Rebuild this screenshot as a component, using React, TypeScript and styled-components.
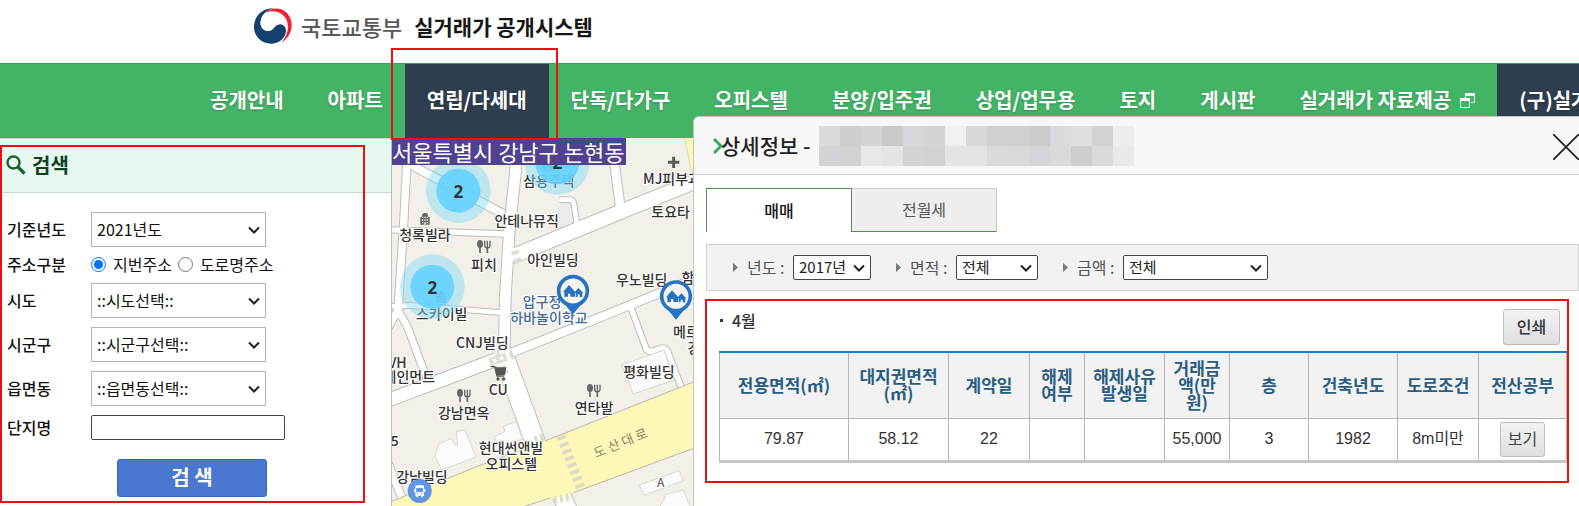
import React from "react";
import styled, { createGlobalStyle, css } from "styled-components";

const KOREAN = `"Noto Sans CJK KR", sans-serif`;
const RED = "#ee0d12";

const GlobalStyle = createGlobalStyle`
  *, *::before, *::after { box-sizing: border-box; }
  body { margin: 0; background: #fff; color: #111; font: 16px/20px ${KOREAN}; }
  button, input, select { font: inherit; color: inherit; }
`;

const Page = styled.div`
  position: relative;
  overflow: hidden;
`;

/* ---------- header and navigation ---------- */

const Header = styled.header`
  display: flex;
  align-items: center;
  height: 63px;
  padding: 0 0 12px 253px;
`;

const Brand = styled.a`
  display: flex;
  align-items: center;
  color: #161616;
  font-size: 21px;
  font-weight: 700;
  white-space: nowrap;
  text-decoration: none;
`;

const Ministry = styled.span`
  margin: 0 12px 0 8px;
  color: #58585a;
  font-size: 22px;
  font-weight: 500;
`;

const Nav = styled.nav`
  display: flex;
  height: 75px;
  padding-left: 188px;
  background: #43b366;
  border-top: 1px solid #35a057;
`;

const NavLink = styled.a<{ $dark?: boolean }>`
  display: flex;
  flex: none;
  align-items: center;
  gap: 9px;
  padding: 0 22px 2px;
  color: #fff;
  font-size: 20px;
  font-weight: 700;
  line-height: 24px;
  white-space: nowrap;
  text-decoration: none;
  text-shadow: 0 1px 2px rgba(0, 0, 0, 0.2);
  background: ${(p) => (p.$dark ? "#2f3e4e" : "transparent")};
`;

const NavItem = styled.div`
  position: relative;
  display: flex;
  flex: none;
`;

/* Red marker frame laid over the part it points at. */
const Marker = styled.div<{ $inset: string }>`
  position: absolute;
  z-index: 2;
  inset: ${(p) => p.$inset};
  border: 2px solid ${RED};
  pointer-events: none;
`;

/* ---------- search side bar ---------- */

const Body = styled.main`
  display: flex;
`;

const Side = styled.aside`
  position: relative;
  flex: none;
  width: 391px;
`;

const SideHead = styled.h2`
  display: flex;
  align-items: center;
  gap: 6px;
  height: 55px;
  margin: 0;
  padding: 0 0 2px 6px;
  color: #123f1d;
  font-size: 20px;
  font-weight: 700;
  background: #e6f8ef;
  border-top: 1px solid #c9d8d0;
  border-bottom: 1px solid #c2dccb;
`;

const Form = styled.form`
  display: flex;
  flex-direction: column;
  gap: 9px;
  padding: 19px 0 9px 7px;
`;

const Row = styled.div`
  display: flex;
  align-items: center;
`;

const RowLabel = styled.label`
  width: 84px;
  padding-bottom: 2px;
  font-weight: 500;
  line-height: 16px;
`;

const Choice = styled.label`
  display: flex;
  align-items: center;
  gap: 7px;
  height: 18px;
  margin-right: 6px;
  padding-bottom: 2px;
  line-height: 16px;
`;

const Radio = styled.input`
  width: 15px;
  height: 15px;
  margin: 0;
`;

const SelectBox = styled.div<{ $w: number }>`
  display: grid;
  width: ${(p) => p.$w}px;
`;

const NativeSelect = styled.select<{ $compact?: boolean }>`
  grid-area: 1 / 1;
  width: 100%;
  height: 35px;
  padding: 0 20px 2px 5px;
  appearance: none;
  background: #fff;
  border: 1px solid #b4b4b4;
  border-radius: 0;
  ${(p) =>
    p.$compact &&
    css`
      height: 25px;
      color: #222;
      font-size: 15px;
      border-color: #444;
      border-radius: 2px;
    `}
`;

const Chevron = styled.svg`
  grid-area: 1 / 1;
  place-self: center end;
  margin-right: 6px;
  pointer-events: none;
`;

const NameInput = styled.input`
  width: 194px;
  height: 25px;
  padding: 0 5px;
  border: 1px solid #444;
  border-radius: 2px;
`;

const SearchButton = styled.button`
  width: 150px;
  height: 38px;
  margin: 10px 0 0 110px;
  padding: 0 0 2px;
  color: #fff;
  font-size: 20px;
  font-weight: 700;
  background: #4a77d0;
  border: 1px solid #3565c2;
  border-radius: 3px;
`;

/* ---------- map ---------- */

const MapArea = styled.section`
  position: relative;
  flex: 1;
  min-width: 0;
  background: #f3f0ea;
  border-left: 1px solid #b9b9b9;
`;

const MapDrawing = styled.svg`
  display: block;
  font-family: ${KOREAN};
`;

const MapTitle = styled.div`
  position: absolute;
  top: 0;
  left: 0;
  padding-right: 1px;
  color: #fff;
  font-size: 22px;
  line-height: 27px;
  white-space: nowrap;
  background: #50428f;
`;

/* ---------- detail window ---------- */

const Detail = styled.section`
  position: absolute;
  top: 116px;
  right: 0;
  bottom: 0;
  left: 693px;
  background: #fff;
  border: solid #c4c4c4;
  border-width: 1px 0 0 1px;
  border-top-left-radius: 6px;
`;

const DetailHead = styled.header`
  display: flex;
  align-items: center;
  height: 58px;
  padding-left: 19px;
  background: #f7f7f7;
  border-bottom: 1px solid #ccc;
  border-top-left-radius: 6px;
`;

const DetailTitle = styled.h2`
  margin: 0 8px 0 -2px;
  padding-bottom: 2px;
  color: #222;
  font-size: 21px;
  font-weight: 500;
  white-space: nowrap;
`;

const Mosaic = styled.div`
  display: grid;
  grid-template-columns: repeat(15, 21px);
  grid-auto-rows: 20px;
`;

const Tile = styled.span<{ $c: string }>`
  background: ${(p) => p.$c};
`;

const CloseButton = styled.button`
  display: flex;
  margin-left: auto;
  padding: 3px 0 0;
  background: none;
  border: 0;
`;

const DetailBody = styled.div`
  padding: 13px 0 0 11px;
`;

const Tabs = styled.div`
  display: flex;
  margin-left: 1px;
`;

const Tab = styled.button<{ $active?: boolean }>`
  width: 145px;
  height: 44px;
  padding: 0 0 2px;
  color: #555;
  background: #eee;
  border: solid #ccc;
  border-width: 1px 1px 1px 0;
  border-bottom-color: #4f8f52;
  ${(p) =>
    p.$active &&
    css`
      width: 146px;
      color: #111;
      font-weight: 500;
      background: #fff;
      border-width: 1px 1px 0 1px;
      border-color: #4f8f52;
    `}
`;

const Filters = styled.div`
  display: flex;
  align-items: center;
  gap: 25px;
  height: 47px;
  margin: 12px 0 8px 1px;
  padding-left: 26px;
  background: #f2f2f2;
  border: 1px solid #d2d2d2;
`;

const Filter = styled.div`
  display: flex;
  align-items: center;
`;

const FilterLabel = styled.label`
  width: 46px;
  margin-left: 9px;
  padding-bottom: 2px;
  color: #555;
  white-space: nowrap;
`;

const Month = styled.section`
  margin-right: 10px;
  padding: 8px 1px 18px 12px;
  border: 2px solid ${RED};
`;

const MonthHead = styled.div`
  display: flex;
  justify-content: space-between;
  margin: 0 6px 6px 1px;
`;

const MonthTitle = styled.h3`
  display: flex;
  align-items: center;
  gap: 9px;
  height: 22px;
  margin: 0;
  color: #333;
  font-size: 16px;
  font-weight: 500;

  &::before {
    width: 3px;
    height: 3px;
    background: #333;
    content: "";
  }
`;

const GrayButton = styled.button<{ $small?: boolean }>`
  width: ${(p) => (p.$small ? 45 : 57)}px;
  height: ${(p) => (p.$small ? 35 : 36)}px;
  padding: 0 0 2px;
  color: ${(p) => (p.$small ? "#444" : "#333")};
  font-family: ${KOREAN};
  font-weight: ${(p) => (p.$small ? 400 : 500)};
  background: linear-gradient(#f3f3f3, #dcdee0);
  border: 1px solid #bcbcbc;
  border-radius: 3px;
`;

const Table = styled.table`
  width: 100%;
  table-layout: fixed;
  border-collapse: collapse;
  color: #333;
  font-family: "Liberation Sans", ${KOREAN};
  text-align: center;
  border-top: 2px solid #2b7ab3;
  border-bottom: 3px solid #c6c6c6;
`;

const Th = styled.th`
  height: 66px;
  padding: 0 0 2px;
  color: #2a5d82;
  font: 700 17px/17px ${KOREAN};
  white-space: pre;
  background: #f2f2f2;
  border: solid #b5b5b5;
  border-width: 0 1px 1px 1px;
`;

const Td = styled.td`
  height: 43px;
  padding: 0;
  border: solid #b5b5b5;
  border-width: 1px 1px 0 1px;
`;

/* ---------- data ---------- */

const MENU: { text: string; dark?: boolean; marked?: boolean; popup?: boolean }[] = [
  { text: "공개안내" },
  { text: "아파트" },
  { text: "연립/다세대", dark: true, marked: true },
  { text: "단독/다가구" },
  { text: "오피스텔" },
  { text: "분양/입주권" },
  { text: "상업/업무용" },
  { text: "토지" },
  { text: "게시판" },
  { text: "실거래가 자료제공", popup: true },
  { text: "(구)실거래가", dark: true },
];

const AREAS = [
  { id: "sido", label: "시도", text: "::시도선택::" },
  { id: "sigungu", label: "시군구", text: "::시군구선택::" },
  { id: "dong", label: "읍면동", text: "::읍면동선택::" },
];

const FILTERS = [
  { id: "year", label: "년도", text: "2017년", width: 78 },
  { id: "size", label: "면적", text: "전체", width: 82 },
  { id: "price", label: "금액", text: "전체", width: 145 },
];

const COLUMNS: [string, number, React.ReactNode][] = [
  ["전용면적(㎡)", 129, "79.87"],
  ["대지권면적\n(㎡)", 100, "58.12"],
  ["계약일", 81, "22"],
  ["해제\n여부", 55, ""],
  ["해제사유\n발생일", 80, ""],
  ["거래금\n액(만\n원)", 65, "55,000"],
  ["층", 79, "3"],
  ["건축년도", 89, "1982"],
  ["도로조건", 81, "8m미만"],
  ["전산공부", 88, <GrayButton key="view" type="button" $small>보기</GrayButton>],
];

const TILES = (
  "dadada cfcfcf d4d4d4 c9c9c9 d6d7da d4d4d6 f0f0f0 d8d8d8 d0d0d0 d0d0d0 cbcbcb d9dadd dde0e2 d2d2d2 ededed " +
  "d3d4d8 d2d2d2 e8e8e8 e4e4e4 d4d4d4 d2d2d2 e4e4e4 e1e3e5 d9dade d9d9d9 d4d5d9 dadada cecece dadada e8e9eb"
).split(" ");

/* ---------- map drawing data (three units to a pixel) ---------- */

const ROADS: [string, number][] = [
  ["M52 60 L50 110 L40 300 L24 540 L-10 600", 22],
  ["M24 540 L52 590 L110 745", 20],
  ["M45 95 L340 252", 24],
  ["M380 60 L376 130 L358 300 L346 500 L342 690", 32],
  ["M-5 299 L345 312", 16],
  ["M365 380 L690 246 L940 145", 42],
  ["M668 60 L692 240", 26],
  ["M508 209 H540 Q550 210 552 222 L562 290", 14],
  ["M-10 812 L320 688", 38],
  ["M330 682 L620 566 L930 440", 24],
  ["M718 520 L768 655 Q774 668 790 662 L815 654 Q828 652 834 666 L884 800", 16],
  ["M344 685 L437 940", 58],
  ["M-5 530 L60 526 L335 548", 14],
  ["M-5 1000 L40 1115", 22],
  ["M510 1090 L535 1140", 52],
];

const BUILDINGS = [
  "135,980 145,942 185,925 195,945 203,945 199,905 225,900 258,982 155,1020",
  "312,920 345,905 340,888 378,876 398,925 330,960",
  "695,705 822,660 852,750 730,792",
  "748,1065 868,1022 880,1052 762,1096",
  "810,1130 830,1092 880,1080 900,1130",
];

const PLACES: [string, number, number][] = [
  ["삼용주택", 476, 168],
  ["MJ피부과", 846, 163],
  ["토요타", 842, 262],
  ["안테나뮤직", 410, 289],
  ["청록빌라", 105, 331],
  ["피치", 282, 419],
  ["아인빌딩", 489, 404],
  ["우노빌딩", 755, 464],
  ["함", 894, 460],
  ["스카이빌", 155, 568],
  ["CNJ빌딩", 277, 655],
  ["VH", 22, 713],
  ["테인먼트", 58, 757],
  ["CU", 325, 796],
  ["강남면옥", 221, 864],
  ["평화빌딩", 777, 742],
  ["메르", 888, 621],
  ["강", 912, 670],
  ["연타발", 612, 848],
  ["5", 14, 948],
  ["현대썬앤빌", 363, 970],
  ["오피스텔", 364, 1018],
  ["강남빌딩", 96, 1056],
];

const CLUSTERS = [
  [205, 182],
  [127, 470],
  [502, 97],
];

const PINS = [
  [549, 483],
  [858, 499],
];

/* ---------- parts ---------- */

function Select(props: { id: string; text: string; width: number; compact?: boolean }) {
  return (
    <SelectBox $w={props.width}>
      <NativeSelect id={props.id} $compact={props.compact}>
        <option>{props.text}</option>
      </NativeSelect>
      <Chevron width="12" height="8" viewBox="0 0 12 8" fill="none" stroke="#222" strokeWidth="2">
        <path d="M1 1.5 L6 6.5 L11 1.5" />
      </Chevron>
    </SelectBox>
  );
}

function Emblem() {
  return (
    <svg width="40" height="38" viewBox="0 0 120 114" aria-hidden="true">
      <path
        d="M62 4 C28 2 3 28 3 60 C3 90 28 111 56 110 C80 109 98 92 99 72 C99 58 92 52 82 52 C64 52 64 72 46 72 C30 72 22 60 23 44 C24 24 42 8 62 4 Z"
        fill="#12406f"
      />
      <path d="M36 18 C58 -4 98 0 112 34 C124 64 108 96 84 107 C108 84 112 46 92 26 C76 10 52 10 36 18 Z" fill="#ec2136" />
      <path d="M23 42 C28 22 54 8 78 20 C98 32 104 56 98 64 C94 50 76 46 66 58 C58 68 50 74 40 70 C26 66 20 54 23 42 Z" fill="#fff" />
    </svg>
  );
}

function Cutlery({ x, y }: { x: number; y: number }) {
  return (
    <g transform={`translate(${x} ${y})`} fill="#666" stroke="#666">
      <ellipse cx="-11" cy="-8" rx="9" ry="12" stroke="none" />
      <path d="M-11 0 V19 M11 4 V19" strokeWidth="5" />
      <path d="M3 -18 V-4 Q3 4 11 4 Q19 4 19 -4 V-18 M11 -18 V4" fill="none" strokeWidth="4" />
    </g>
  );
}

function House({ x, y }: { x: number; y: number }) {
  return (
    <g transform={`translate(${x} ${y})`}>
      <path d="M-14 18 V-6 H-9 V-12 L-4 -17 H4 L9 -12 V-6 H14 V18 Z" fill="#666" />
      <path d="M-9 -4 h4 M-2 -4 h4 M5 -4 h4 M-9 4 h4 M-2 4 h4 M5 4 h4 M-9 12 h4 M5 12 h4" stroke="#f3f0ea" strokeWidth="4" />
      <path d="M-2 10 h4 v8 h-4 Z" fill="#f3f0ea" />
    </g>
  );
}

function CityMap() {
  return (
    <MapDrawing width="302" height="368" viewBox="6 24 906 1104" role="img" aria-label="논현동 지도">
      <rect x="0" y="0" width="930" height="1140" fill="#f3f0ea" />
      <path d="M500 225 L540 215 L552 285 L505 300 Z" fill="#ebebeb" />
      <g fill="none" stroke="#bdbdbd">
        {ROADS.map(([d, w]) => (
          <path key={d} d={d} strokeWidth={w + 6} />
        ))}
      </g>
      <g fill="none" stroke="#fff">
        {ROADS.map(([d, w]) => (
          <path key={d} d={d} strokeWidth={w} />
        ))}
      </g>
      <path d="M-5 1118 L250 1014 L465 933 L930 748 V948 L545 1090 L370 1140 H-5 Z" fill="#fdf7b8" />
      <path d="M-5 1118 L250 1014 L405 955 M465 933 L930 748 M930 948 L550 1088 M480 1104 L370 1140" fill="none" stroke="#b8b8b0" strokeWidth="3" />
      <path d="M884 20 H930 V190 L905 130 Z" fill="#fdf7b8" stroke="#c8c8c0" strokeWidth="2" />
      <g fill="#fafafa" stroke="#d9d9d9" strokeWidth="3">
        {BUILDINGS.map((points) => (
          <polygon key={points} points={points} />
        ))}
      </g>
      <g fill="none">
        <path d="M513 918 L574 1078" stroke="#dedbc2" strokeWidth="28" strokeDasharray="11 11" />
        <path d="M300 698 L372 672" stroke="#deddd5" strokeWidth="26" strokeDasharray="11 10" />
        <path d="M320 675 L345 740" stroke="#deddd5" strokeWidth="28" strokeDasharray="9 9" />
        <path d="M374 362 L386 402" stroke="#deddd5" strokeWidth="24" strokeDasharray="12 12" />
        <path d="M434 930 L468 918 M492 1110 L550 1100" stroke="#dedbc2" strokeWidth="22" strokeDasharray="9 9" />
      </g>
      <g fill="#333" stroke="#fff" strokeWidth="6" strokeLinejoin="round" paintOrder="stroke" fontSize="42" fontWeight="500" textAnchor="middle">
        {PLACES.map(([name, x, y]) => (
          <text key={name} x={x} y={y}>
            {name}
          </text>
        ))}
        <g fill="#3f6a93">
          <text x="456" y="530">압구정</text>
          <text x="477" y="579">하바놀이학교</text>
        </g>
        <text x="812" y="1070" fontSize="36" fill="#666">A</text>
        <text transform="translate(697 952) rotate(-22)" fontSize="39" fontWeight="400" fill="#8b8566" stroke="none">
          도 산 대 로
        </text>
      </g>
      <Cutlery x={281} y={350} />
      <Cutlery x={221} y={797} />
      <Cutlery x={611} y={782} />
      <House x={105} y={266} />
      <House x={153} y={500} />
      <House x={473} y={103} />
      <path d="M851 80 V114 M834 97 H868" stroke="#5b5b5b" strokeWidth="9" />
      <g stroke="#555" strokeWidth="4" fill="#555">
        <path d="M302 710 H314 L321 738 H343" fill="none" />
        <path d="M317 714 H347 L343 733 H321 Z" />
        <circle cx="324" cy="747" r="3" />
        <circle cx="341" cy="747" r="3" />
      </g>
      {CLUSTERS.map(([x, y]) => (
        <g key={x}>
          <circle cx={x} cy={y} r="97" fill="#7dd9f5" fillOpacity="0.45" />
          <circle cx={x} cy={y} r="66" fill="#5fd0ff" fillOpacity="0.85" />
          <text x={x} y={y + 21} fontSize="51" fontWeight="700" fontFamily="Noto Sans, sans-serif" fill="#333" textAnchor="middle">
            2
          </text>
        </g>
      ))}
      {PINS.map(([x, y]) => (
        <g key={x} transform={`translate(${x} ${y})`}>
          <path d="M-28 36 L0 70 L28 36 Z" fill="#2673c2" />
          <circle r="43" fill="#f6f4f0" stroke="#2673c2" strokeWidth="11" />
          <path d="M-30 3 L-12 -18 L7 3 V17 H-8 V8 H-15 V17 H-26 V3 Z M3 6 L16 -9 L31 6 H28 V18 H20 V10 H14 V18 H9 V6 Z" fill="#2673c2" />
        </g>
      ))}
      <g transform="translate(89 1083)">
        <circle r="36" fill="#5f95e2" />
        <path d="M-13 -16 Q0 -20 13 -16 V14 H10 V19 H5 V14 H-5 V19 H-10 V14 H-13 Z M-17 -6 H17 V3 H-17 Z" fill="#fff" />
        <path d="M-9 -8 H9 V2 H-9 Z M-9 8 h4 M5 8 h4" fill="#5f95e2" stroke="#5f95e2" strokeWidth="3" />
      </g>
    </MapDrawing>
  );
}

export default function App() {
  return (
    <Page>
      <GlobalStyle />
      <Header>
        <Brand href="#">
          <Emblem />
          <Ministry>국토교통부</Ministry>
          실거래가 공개시스템
        </Brand>
      </Header>

      <Nav>
        {MENU.map((item) => (
          <NavItem key={item.text}>
            <NavLink href="#" $dark={item.dark}>
              {item.text}
              {item.popup && (
                <svg width="15" height="15" viewBox="0 0 15 15" fill="none" stroke="#fff" aria-hidden="true">
                  <path d="M5.5 5 V0.5 H14.5 V9.5 H11" />
                  <path d="M5 1.5 H15" strokeWidth="3" />
                  <path d="M0.5 6.5 H9.5 V14.5 H0.5 Z" />
                  <path d="M0 6.5 H10" strokeWidth="3" />
                </svg>
              )}
            </NavLink>
            {item.marked && <Marker $inset="-16px -9px -2px -14px" />}
          </NavItem>
        ))}
      </Nav>

      <Body>
        <Side>
          <SideHead>
            <svg width="20" height="20" viewBox="0 0 20 20" fill="none" stroke="#17632a" aria-hidden="true">
              <circle cx="7.5" cy="7.5" r="6" strokeWidth="2.4" />
              <path d="M12 12 L18.5 18.5" strokeWidth="3.2" />
            </svg>
            검색
          </SideHead>
          <Form onSubmit={(e) => e.preventDefault()}>
            <Row>
              <RowLabel htmlFor="base-year">기준년도</RowLabel>
              <Select id="base-year" text="2021년도" width={175} />
            </Row>
            <Row role="radiogroup" aria-labelledby="address-kind">
              <RowLabel as="span" id="address-kind">주소구분</RowLabel>
              <Choice>
                <Radio type="radio" name="address" defaultChecked />
                지번주소
              </Choice>
              <Choice>
                <Radio type="radio" name="address" />
                도로명주소
              </Choice>
            </Row>
            {AREAS.map((area) => (
              <Row key={area.id}>
                <RowLabel htmlFor={area.id}>{area.label}</RowLabel>
                <Select id={area.id} text={area.text} width={175} />
              </Row>
            ))}
            <Row>
              <RowLabel htmlFor="complex">단지명</RowLabel>
              <NameInput id="complex" type="text" />
            </Row>
            <SearchButton type="submit">검 색</SearchButton>
          </Form>
          <Marker $inset="7px 26px 3px 0" />
        </Side>

        <MapArea>
          <CityMap />
          <MapTitle>서울특별시 강남구 논현동</MapTitle>
        </MapArea>
      </Body>

      <Detail>
        <DetailHead>
          <svg width="10" height="16" viewBox="0 0 10 16" fill="none" stroke="#2fae57" strokeWidth="3" aria-hidden="true">
            <path d="M1 1 L8 8 L1 15" />
          </svg>
          <DetailTitle>상세정보 -</DetailTitle>
          <Mosaic>
            {TILES.map((color, i) => (
              <Tile key={i} $c={`#${color}`} />
            ))}
          </Mosaic>
          <CloseButton type="button" aria-label="닫기">
            <svg width="26" height="26" viewBox="0 0 26 26" stroke="#222" strokeWidth="1.8">
              <path d="M0 0 L26 26 M26 0 L0 26" />
            </svg>
          </CloseButton>
        </DetailHead>

        <DetailBody>
          <Tabs role="tablist">
            <Tab type="button" role="tab" aria-selected $active>매매</Tab>
            <Tab type="button" role="tab" aria-selected={false}>전월세</Tab>
          </Tabs>

          <Filters>
            {FILTERS.map((f) => (
              <Filter key={f.id}>
                <svg width="5" height="9" viewBox="0 0 5 9" fill="#777" aria-hidden="true">
                  <path d="M0 0 L5 4.5 L0 9 Z" />
                </svg>
                <FilterLabel htmlFor={f.id}>{f.label} :</FilterLabel>
                <Select id={f.id} text={f.text} width={f.width} compact />
              </Filter>
            ))}
          </Filters>

          <Month>
            <MonthHead>
              <MonthTitle>4월</MonthTitle>
              <GrayButton type="button">인쇄</GrayButton>
            </MonthHead>
            <Table>
              <colgroup>
                {COLUMNS.map(([name, width]) => (
                  <col key={name} width={width} />
                ))}
              </colgroup>
              <thead>
                <tr>
                  {COLUMNS.map(([name]) => (
                    <Th key={name} scope="col">{name}</Th>
                  ))}
                </tr>
              </thead>
              <tbody>
                <tr>
                  {COLUMNS.map(([name, , value]) => (
                    <Td key={name}>{value}</Td>
                  ))}
                </tr>
              </tbody>
            </Table>
          </Month>
        </DetailBody>
      </Detail>
    </Page>
  );
}
